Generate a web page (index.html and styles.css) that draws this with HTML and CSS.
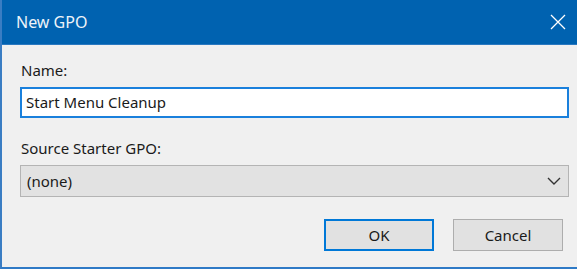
FILE: index.html
```html
<!DOCTYPE html>
<html lang="en">
<head>
    <meta charset="UTF-8">
    <title>New GPO</title>
    <link rel="stylesheet" href="styles.css">
</head>
<body>

<div class="dialog">
    <!-- Title bar -->
    <div class="title-bar">
        <span class="title">New GPO</span>
        <span class="close-button">
            <svg width="16" height="16" viewBox="0 0 16 16">
                <path d="M1 1 L15 15 M15 1 L1 15" stroke="#ffffff" stroke-width="1.3" fill="none"/>
            </svg>
        </span>
    </div>

    <!-- Dialog body -->
    <div class="dialog-body">
        <label class="field-label">Name:</label>
        <div class="text-box">Start Menu Cleanup</div>

        <label class="field-label second">Source Starter GPO:</label>
        <div class="combo-box">
            <span>(none)</span>
            <svg width="14" height="8" viewBox="0 0 14 8">
                <path d="M1 1 L7 7 L13 1" stroke="#333333" stroke-width="1.4" fill="none"/>
            </svg>
        </div>

        <div class="button-row">
            <button class="dialog-button default">OK</button>
            <button class="dialog-button">Cancel</button>
        </div>
    </div>
</div>

</body>
</html>
```

FILE: styles.css
```css
body {
    margin: 0;
    padding: 0;
    background-color: #f0f0f0;
    font-family: "Noto Sans", "Open Sans", sans-serif;
    font-size: 15px;
    color: #1a1a1a;
    overflow: hidden;
}
.dialog {
    width: 575px;
    height: 267px;
    border-left: 2px solid #3a7dc3;
    border-bottom: 2px solid #2f7ac6;
    background-color: #f0f0f0;
    display: flex;
    flex-direction: column;
}
.title-bar {
    height: 44px;
    border-bottom: 1px solid #2a78c0;
    background-color: #0062b0;
    display: flex;
    align-items: center;
    justify-content: space-between;
    padding: 0 11px 0 14px;
}
.title {
    color: #eef3f9;
    font-size: 16px;
    margin-top: -1px;
}
.close-button {
    display: flex;
    width: 16px;
    height: 16px;
}
.dialog-body {
    display: flex;
    flex-direction: column;
    padding: 15px 8px 0 18px;
}
.field-label {
    line-height: 20px;
    height: 20px;
    padding-left: 1px;
}
.field-label.second {
    margin-top: 20px;
}
.text-box {
    margin-top: 7px;
    height: 27px;
    line-height: 27px;
    border: 2px solid #1a80dc;
    background-color: #ffffff;
    padding-left: 4px;
}
.combo-box {
    margin-top: 7px;
    height: 30px;
    border: 1px solid #b4b4b4;
    background-color: #e2e2e2;
    padding: 0 7px 0 6px;
    display: flex;
    align-items: center;
    justify-content: space-between;
}
.button-row {
    display: flex;
    justify-content: flex-end;
    gap: 19px;
    margin-top: 22px;
    padding-right: 6px;
}
.dialog-button {
    width: 110px;
    height: 32px;
    font-family: inherit;
    font-size: 15px;
    color: #1a1a1a;
    background-color: #e1e1e1;
    border: 1px solid #adadad;
    padding: 0;
}
.dialog-button.default {
    border: 2px solid #0078d7;
}
```
